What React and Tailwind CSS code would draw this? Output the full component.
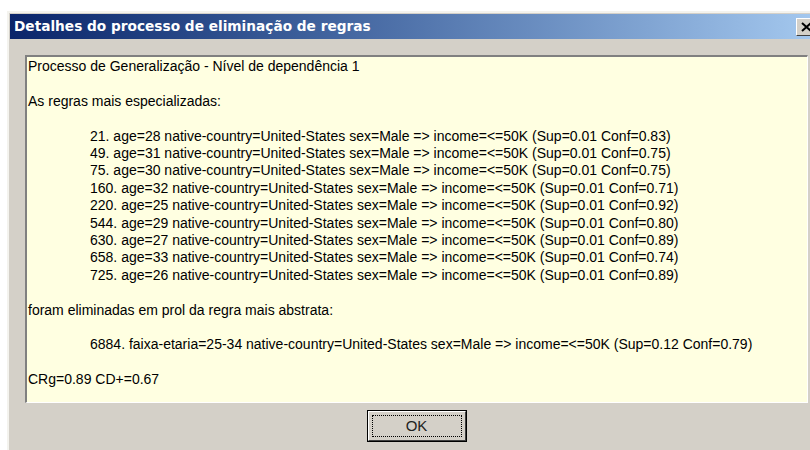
import React from 'react';

const rules = [
  '21. age=28 native-country=United-States sex=Male => income=<=50K (Sup=0.01 Conf=0.83)',
  '49. age=31 native-country=United-States sex=Male => income=<=50K (Sup=0.01 Conf=0.75)',
  '75. age=30 native-country=United-States sex=Male => income=<=50K (Sup=0.01 Conf=0.75)',
  '160. age=32 native-country=United-States sex=Male => income=<=50K (Sup=0.01 Conf=0.71)',
  '220. age=25 native-country=United-States sex=Male => income=<=50K (Sup=0.01 Conf=0.92)',
  '544. age=29 native-country=United-States sex=Male => income=<=50K (Sup=0.01 Conf=0.80)',
  '630. age=27 native-country=United-States sex=Male => income=<=50K (Sup=0.01 Conf=0.89)',
  '658. age=33 native-country=United-States sex=Male => income=<=50K (Sup=0.01 Conf=0.74)',
  '725. age=26 native-country=United-States sex=Male => income=<=50K (Sup=0.01 Conf=0.89)',
];

function CloseButton() {
  return (
    <div className="w-[21px] h-[18px] bg-[#d4d0c8] border-t border-l border-white border-r border-b border-r-[#404040] border-b-[#404040] flex items-center justify-center">
      <svg width="11" height="10" viewBox="0 0 11 10">
        <path d="M1 1 L10 9 M10 1 L1 9" stroke="#000" strokeWidth="2" />
      </svg>
    </div>
  );
}

export default function App() {
  return (
    <div className="w-[810px] h-[450px] bg-white overflow-hidden" style={{ fontFamily: '"Liberation Sans", Arial, sans-serif' }}>
      <div className="mt-[11px] ml-[7px] w-[816px] h-[460px] bg-[#d4d0c8] border-t-2 border-l-2 border-[#f4f3ee] pt-px pl-px">
        {/* title bar */}
        <div className="h-[25px] flex items-center justify-between pl-[4px] pr-[6px] bg-gradient-to-r from-[#0a246a] to-[#a6caf0]">
          <span className="text-white font-bold text-[13.7px]" style={{ fontFamily: '"DejaVu Sans", Tahoma, sans-serif' }}>
            Detalhes do processo de eliminação de regras
          </span>
          <CloseButton />
        </div>

        <div className="mt-[16px] mx-[15px] h-[348px] bg-[#ffffe1] border-t-2 border-l-2 border-t-[#808080] border-l-[#808080] border-r border-b border-r-white border-b-white pt-[1px] pl-[1px] text-[14px] leading-[17.4px] text-black">
          <div>Processo de Generalização - Nível de dependência 1</div>
          <div className="h-[17.4px]" />
          <div>As regras mais especializadas:</div>
          <div className="h-[17.4px]" />
          {rules.map((r) => (
            <div key={r} className="pl-[62px]">{r}</div>
          ))}
          <div className="h-[17.4px]" />
          <div>foram eliminadas em prol da regra mais abstrata:</div>
          <div className="h-[17.4px]" />
          <div className="pl-[62px]">6884. faixa-etaria=25-34 native-country=United-States sex=Male =&gt; income=&lt;=50K (Sup=0.12 Conf=0.79)</div>
          <div className="h-[17.4px]" />
          <div>CRg=0.89 CD+=0.67</div>
        </div>

        {/* OK button */}
        <div className="mt-[7px] flex justify-center">
          <div className="w-[100px] h-[32px] border border-black">
            <div className="w-full h-full border-t border-l border-white border-r border-b border-r-[#404040] border-b-[#404040] p-[3px]">
              <div className="w-full h-full border border-dotted border-black flex items-center justify-center text-[15px] text-[#222]">
                OK
              </div>
            </div>
          </div>
        </div>
      </div>
    </div>
  );
}
